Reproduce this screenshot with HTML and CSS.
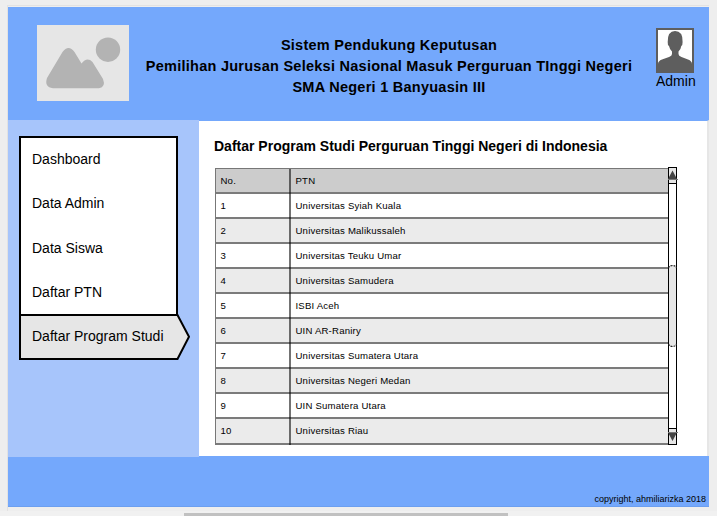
FILE: index.html
```html
<!DOCTYPE html>
<html lang="id">
<head>
<meta charset="utf-8">
<title>Daftar Program Studi</title>
<link rel="stylesheet" href="styles.css">
</head>
<body>
<div class="frame">
  <header class="header">
    <svg class="logo" width="92" height="76" viewBox="0 0 92 76">
      <rect width="92" height="76" fill="#e6e6e6"/>
      <circle cx="71" cy="24.7" r="12.2" fill="#b3b3b3"/>
      <path d="M10 53 L25.500 27 Q31.500 19 37.500 27 L44.500 38.500 Q50 31.500 55.500 37 L66 54 Q69 62 62 63.300 H16 Q7 62 10 53Z" fill="#b3b3b3"/>
    </svg>
    <h1 class="title"><span>Sistem Pendukung Keputusan</span><span>Pemilihan Jurusan Seleksi Nasional Masuk Perguruan TInggi Negeri</span><span>SMA Negeri 1 Banyuasin III</span></h1>
    <div class="user">
      <svg width="38" height="45" viewBox="0 0 38 45">
        <rect x="1" y="1" width="36" height="43" fill="#fff" stroke="#5e5e5e" stroke-width="2"/>
        <path d="M2 44 V36 Q2 33 6 31.500 L13 29 Q16 28 16 26 V23.500 Q13.500 21 13 18 Q11.500 17 11.700 14 Q11.500 3 19 3 Q27 3 26.600 14 Q26.700 17 25.300 18 Q25 21 22.500 23.500 V26 Q22.500 28 25.500 29 L32 31.500 Q36 33 36 36 V44Z" fill="#5e5e5e"/>
      </svg>
      <span class="user-name">Admin</span>
    </div>
  </header>
  <div class="middle">
    <aside class="sidebar">
      <nav class="menu">
        <a>Dashboard</a>
        <a>Data Admin</a>
        <a>Data Siswa</a>
        <a>Daftar PTN</a>
      </nav>
      <div class="active">
        <svg class="arrow" width="171" height="46" viewBox="0 0 171 46"><path d="M1 1 H158.500 L170 22.700 L158.500 45 H1Z" fill="#e6e6e6" stroke="#000" stroke-width="2"/></svg>
        <a>Daftar Program Studi</a>
      </div>
    </aside>
    <main class="content">
      <h2 class="heading">Daftar Program Studi Perguruan Tinggi Negeri di Indonesia</h2>
      <div class="list">
        <div class="table">
          <div class="row head"><span>No.</span><span>PTN</span></div>
          <div class="row"><span>1</span><span>Universitas Syiah Kuala</span></div>
          <div class="row"><span>2</span><span>Universitas Malikussaleh</span></div>
          <div class="row"><span>3</span><span>Universitas Teuku Umar</span></div>
          <div class="row"><span>4</span><span>Universitas Samudera</span></div>
          <div class="row"><span>5</span><span>ISBI Aceh</span></div>
          <div class="row"><span>6</span><span>UIN AR-Raniry</span></div>
          <div class="row"><span>7</span><span>Universitas Sumatera Utara</span></div>
          <div class="row"><span>8</span><span>Universitas Negeri Medan</span></div>
          <div class="row"><span>9</span><span>UIN Sumatera Utara</span></div>
          <div class="row last"><span>10</span><span>Universitas Riau</span></div>
        </div>
        <svg class="scroll" width="10" height="278" viewBox="0 0 10 278">
          <rect x="0.500" y="0.500" width="8" height="277" fill="#fff" stroke="#000"/>
          <rect x="0.500" y="0.500" width="8" height="16" fill="#e6e6e6" stroke="#000"/>
          <rect x="0.500" y="261.500" width="8" height="16" fill="#e6e6e6" stroke="#000"/>
          <path d="M0.500 0 V278 M8.500 0 V278" stroke="#000"/>
          <rect x="1" y="98.500" width="7" height="81" rx="3" fill="#e6e6e6"/>
          <path d="M0.500 101 Q1.500 98.500 4.500 98.500 T8.500 101 M0.500 177 Q1.500 179.500 4.500 179.500 T8.500 177" fill="none" stroke="#222" stroke-width="1.200" stroke-dasharray="2 1"/>
          <path d="M4.500 3.500 L9 12 H0Z M4.500 274 L0 265.500 H9Z" fill="#444"/>
          <path d="M0 12.500 H10 M0 265.500 H10" stroke="#777"/>
        </svg>
      </div>
    </main>
  </div>
  <footer class="footer">copyright, ahmiliarizka 2018</footer>
</div>
<div class="bottom-scroll"><div class="thumb"></div></div>
</body>
</html>
```
FILE: styles.css
```css
* { box-sizing: border-box; }
body {
  margin: 0;
  height: 516px;
  overflow: hidden;
  background: #eee;
  color: #000;
  font-family: "Liberation Sans", Arial, sans-serif;
  font-size: 14px;
}
.frame {
  width: 702px;
  height: 506px;
  margin: 5px 0 0 7px;
  border-top: 1px solid #e2e2e2;
  border-left: 1px solid #e2e2e2;
  display: flex;
  flex-direction: column;
  padding-top: 1px;
}
.header {
  height: 113px;
  flex: none;
  display: flex;
  background: #74a8fc;
}
.logo { margin: 18px 0 0 29px; flex: none; }
.title {
  width: 520px;
  margin: 28px 0 0;
  flex: none;
  font-size: 14.5px;
  letter-spacing: 0.26px;
  line-height: 21px;
  text-align: center;
  white-space: nowrap;
}
.title span { display: block; }
.user {
  width: 50px;
  margin: 21px 0 0 7px;
  flex: none;
}
.user svg { display: block; }
.user-name { display: block; line-height: 17px; }
.middle { height: 336px; flex: none; display: flex; }
.sidebar {
  width: 191px;
  height: 337px;
  flex: none;
  padding: 16px 0 0 11px;
  background: #a7c5fb;
  position: relative;
}
.menu {
  width: 159px;
  height: 178px;
  border: 2px solid #000;
  border-bottom: 0;
  background: #fff;
}
.menu a { display: block; height: 44.400px; padding-left: 11px; line-height: 43px; }
.active { position: relative; height: 46px; }
.arrow { position: absolute; left: 0; top: 0; }
.active a { position: relative; display: block; padding-left: 13px; line-height: 45px; white-space: nowrap; }
.content {
  width: 510px;
  padding: 0 0 0 15px;
  background: #fff;
  border-top: 1px solid #74a8fc;
  border-right: 2px solid #e6e6e6;
}
.heading {
  margin: 15px 0 0;
  font-size: 14px;
  line-height: 20px;
  height: 31px;
  white-space: nowrap;
}
.list { display: flex; }
.table {
  width: 454px;
  height: 277px;
  margin: 1px 0 0 1px;
  flex: none;
  border-top: 1px solid #777;
  border-left: 1px solid #777;
  font-size: 9.6px;
  letter-spacing: 0.19px;
}
.row {
  height: 25px;
  display: grid;
  grid-template-columns: 75px 1fr;
  line-height: 23px;
  border-bottom: 2px solid #7b7b7b;
  background: #fff;
}
.row span { padding-left: 4.500px; white-space: nowrap; height: 25px; }
.row span:first-child { border-right: 2px solid rgba(0, 0, 0, 0.55); }
.row:nth-child(odd) { background: #ebebeb; }
.row.head { background: #ccc; }
.row.last { height: 26px; }
.row.last span { height: 26px; }
.scroll { flex: none; margin-left: -1px; }
.footer {
  height: 51px;
  flex: none;
  padding: 37px 3px 0 0;
  background: #74a8fc;
  border-bottom: 1px solid #6c9ff0;
  font-size: 9px;
  line-height: 12px;
  text-align: right;
}
.bottom-scroll { height: 5px; padding-top: 2px; background: #f1f1f1; }
.thumb { width: 324px; height: 3px; margin-left: 184px; background: #c1c1c1; }
```
